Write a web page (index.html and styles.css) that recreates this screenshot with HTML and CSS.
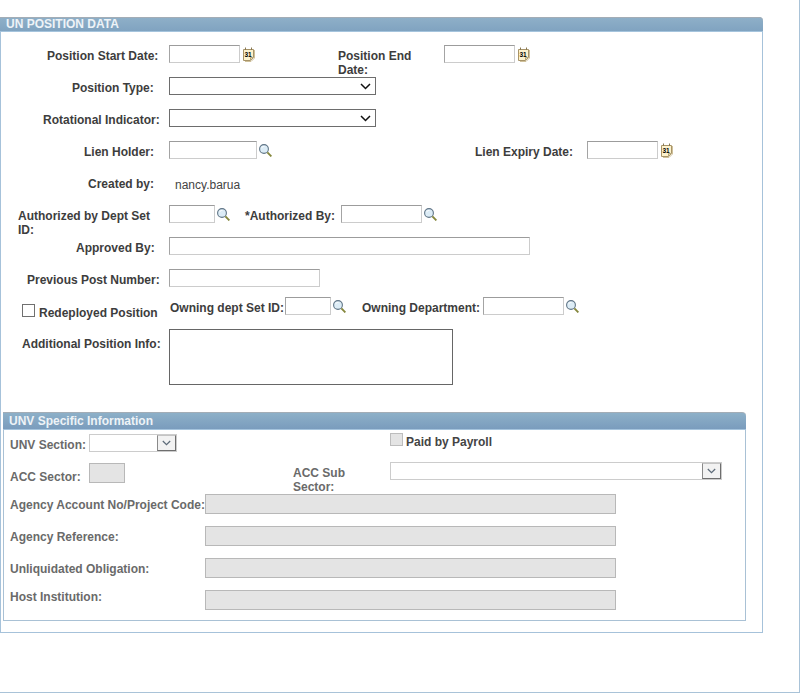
FILE: index.html
```html
<!DOCTYPE html>
<html lang="en">
<head>
<meta charset="utf-8">
<title>UN Position Data</title>
<link rel="stylesheet" href="styles.css">
</head>
<body>
<svg class="defs" width="0" height="0" aria-hidden="true">
  <symbol id="mag" viewBox="0 0 13 13">
    <circle cx="5" cy="5" r="4.4" fill="#dcecf6" stroke="#5f7486" stroke-width="1.1"/>
    <path d="M2.5 4.2C3 3 4 2.4 5.4 2.5" fill="none" stroke="#fff"/>
    <path d="M8.4 8.4L12.4 12.4" stroke="#85873c" stroke-width="1.9"/>
  </symbol>
  <symbol id="chev" viewBox="0 0 11 7">
    <path d="M1 1L5.5 5.5L10 1" fill="none" stroke="currentColor" stroke-width="1.5"/>
  </symbol>
  <symbol id="calbase" viewBox="0 0 13 15">
    <path d="M1.5 2.5H11.5V10.5L8.5 13.5H1.5Z" fill="#fdf2cc" stroke="#a89468"/>
    <path d="M12.5 3V11L9 14.5H3" fill="none" stroke="#cfc09a"/>
    <path d="M8.5 13V10.5H11" fill="#e6d7a8" stroke="#b7a678"/>
    <path d="M3.5 0.5V3M9.5 0.5V3" stroke="#8a7a55"/>
  </symbol>
</svg>
<div class="page">
  <section class="panel">
    <h2 class="head">UN POSITION DATA</h2>
    <div class="body">
      <div class="row">
        <label class="col1 lbl p-start">Position Start Date:</label>
        <input class="in w71" type="text" aria-label="Position Start Date">
        <svg class="cal" viewBox="0 0 13 15"><use href="#calbase"/><text class="cal-num" x="2.6" y="10">31</text></svg>
        <label class="lbl wrap end-lbl">Position End Date:</label>
        <input class="in w71" type="text" aria-label="Position End Date">
        <svg class="cal" viewBox="0 0 13 15"><use href="#calbase"/><text class="cal-num" x="2.6" y="10">31</text></svg>
      </div>
      <div class="row">
        <label class="col1 lbl p-type">Position Type:</label>
        <div class="sel w207"><select aria-label="Position Type"></select><svg class="chev"><use href="#chev"/></svg></div>
      </div>
      <div class="row">
        <label class="col1 lbl p-rot">Rotational Indicator:</label>
        <div class="sel w207"><select aria-label="Rotational Indicator"></select><svg class="chev"><use href="#chev"/></svg></div>
      </div>
      <div class="row">
        <label class="col1 lbl p-lien">Lien Holder:</label>
        <input class="in w88" type="text" aria-label="Lien Holder">
        <svg class="mag"><use href="#mag"/></svg>
        <label class="lbl expiry-lbl">Lien Expiry Date:</label>
        <input class="in w71" type="text" aria-label="Lien Expiry Date">
        <svg class="cal" viewBox="0 0 13 15"><use href="#calbase"/><text class="cal-num" x="2.6" y="10">31</text></svg>
      </div>
      <div class="row">
        <span class="col1 lbl p-created">Created by:</span>
        <span class="value">nancy.barua</span>
      </div>
      <div class="row">
        <label class="col1 lbl wrap p-dept">Authorized by Dept Set ID:</label>
        <input class="in w46" type="text" aria-label="Authorized by Dept Set ID">
        <svg class="mag"><use href="#mag"/></svg>
        <label class="lbl auth-lbl">*Authorized By:</label>
        <input class="in w81" type="text" aria-label="Authorized By">
        <svg class="mag"><use href="#mag"/></svg>
      </div>
      <div class="row">
        <label class="col1 lbl p-appr">Approved By:</label>
        <input class="in w361" type="text" aria-label="Approved By">
      </div>
      <div class="row row-short">
        <label class="col1 lbl p-prev">Previous Post Number:</label>
        <input class="in w151" type="text" aria-label="Previous Post Number">
      </div>
      <div class="row">
        <div class="col1 check-col">
          <input class="check" type="checkbox" id="redeployed">
          <label class="lbl redeployed-lbl" for="redeployed">Redeployed Position</label>
        </div>
        <label class="lbl own-set-lbl">Owning dept Set ID:</label>
        <input class="in w46" type="text" aria-label="Owning dept Set ID">
        <svg class="mag"><use href="#mag"/></svg>
        <label class="lbl own-dept-lbl">Owning Department:</label>
        <input class="in w81" type="text" aria-label="Owning Department">
        <svg class="mag"><use href="#mag"/></svg>
      </div>
      <div class="row row-area">
        <label class="col1 lbl p-info">Additional Position Info:</label>
        <textarea class="area" aria-label="Additional Position Info"></textarea>
      </div>

      <section class="sub">
        <h3 class="subhead">UNV Specific Information</h3>
        <div class="subbody">
          <div class="srow srow-a">
            <label class="slbl col2 unv-lbl">UNV Section:</label>
            <div class="dsel w88 unv-sel"><select aria-label="UNV Section" disabled></select><span class="dbtn"><svg class="chev small"><use href="#chev"/></svg></span></div>
            <input class="check dis paid-check" type="checkbox" disabled aria-label="Paid by Payroll">
            <span class="lbl paid-lbl">Paid by Payroll</span>
          </div>
          <div class="srow srow-b">
            <label class="slbl col2 acc-lbl">ACC Sector:</label>
            <input class="dis-in acc-in" type="text" disabled aria-label="ACC Sector">
            <label class="slbl wrap sub-lbl">ACC Sub Sector:</label>
            <div class="dsel w332"><select aria-label="ACC Sub Sector" disabled></select><span class="dbtn"><svg class="chev small"><use href="#chev"/></svg></span></div>
          </div>
          <div class="srow">
            <label class="slbl col3">Agency Account No/Project Code:</label>
            <input class="dis-in w411" type="text" disabled aria-label="Agency Account No/Project Code">
          </div>
          <div class="srow">
            <label class="slbl col3">Agency Reference:</label>
            <input class="dis-in w411" type="text" disabled aria-label="Agency Reference">
          </div>
          <div class="srow">
            <label class="slbl col3">Unliquidated Obligation:</label>
            <input class="dis-in w411" type="text" disabled aria-label="Unliquidated Obligation">
          </div>
          <div class="srow srow-last">
            <label class="slbl col3 host-lbl">Host Institution:</label>
            <input class="dis-in w411" type="text" disabled aria-label="Host Institution">
          </div>
        </div>
      </section>
    </div>
  </section>
</div>
</body>
</html>
```
FILE: styles.css
```css
* { box-sizing: border-box; }
html, body { margin: 0; padding: 0; background: #fff; }
body { font-family: "Liberation Sans", Arial, sans-serif; font-size: 12px; line-height: 14px; color: #3d3d3d; }
.defs { position: absolute; }
.page { width: 800px; height: 693px; padding-top: 17px; border-right: 1px solid #a9c3d8; border-bottom: 1px solid #a9c3d8; }

.panel { width: 763px; }
.head { margin: 0; height: 15px; padding: 0 0 0 6px; font-size: 12px; line-height: 14px; font-weight: 700; color: #eef3f7;
  background: linear-gradient(#8fb0c8, #7fa2c0); box-shadow: inset 0 1px 0 #a3adb6, inset 0 -1px 0 #a5c4dd; border-top-right-radius: 4px; }
.body { border: 1px solid #a6c2da; border-top: 0; padding: 13px 0 11px; }

.row { display: flex; align-items: flex-start; height: 32px; }
.row-short { height: 28px; }
.row-area { height: 56px; }
.col1 { width: 168px; flex: none; }
.lbl { font-weight: 700; margin-top: 4px; white-space: nowrap; }
.wrap { white-space: normal; }

.p-start { padding-left: 46px; }
.p-type { padding-left: 71px; }
.p-rot { padding-left: 42px; }
.p-lien { padding-left: 83px; }
.p-created { padding-left: 87px; }
.p-dept { padding: 0 10px 0 17px; }
.p-appr { padding-left: 75px; }
.p-prev { padding-left: 26px; }
.p-info { padding-left: 21px; margin-top: 8px; }

.end-lbl { width: 80px; margin: 4px 26px 0 83px; }
.expiry-lbl { width: 112px; margin: 4px 0 0 203px; }
.auth-lbl { width: 96px; margin-left: 15px; }
.own-set-lbl { width: 115px; margin-left: 1px; }
.own-dept-lbl { width: 121px; margin-left: 16px; }
.value { margin: 5px 0 0 6px; color: #444; }

.in { height: 18px; padding: 0 2px; margin: 0; flex: none; background: #fff; border: 1px solid #ccc; border-top-color: #9c9c9c; border-left-color: #a4a4a4; }
.w46 { width: 46px; }
.w71 { width: 71px; }
.w81 { width: 81px; }
.w88 { width: 88px; }
.w151 { width: 151px; }
.w207 { width: 207px; }
.w332 { width: 332px; }
.w361 { width: 361px; }
.w411 { width: 411px; }

.cal { width: 13px; height: 15px; margin: 2px 0 0 2px; flex: none; }
.cal-num { font-family: "Liberation Sans", sans-serif; font-size: 6.5px; font-weight: 700; letter-spacing: -0.2px; fill: #000; }
.mag { width: 13px; height: 13px; margin: 3px 0 0 2px; flex: none; }

.sel { display: flex; align-items: center; height: 18px; flex: none; border: 1px solid #6d6d6d; background: #fff; padding-right: 4px; }
.sel select, .dsel select { flex: 1; min-width: 0; height: 100%; border: 0; padding: 0; margin: 0; background: transparent; appearance: none; -webkit-appearance: none; }
.chev { width: 11px; height: 7px; color: #111; flex: none; }
.chev.small { width: 9px; height: 6px; color: #5c6a78; }

.check-col { display: flex; align-items: flex-start; padding-left: 21px; }
.check { appearance: none; -webkit-appearance: none; width: 13px; height: 13px; margin: 7px 0 0; flex: none; background: #fff; border: 1px solid #707070; }
.redeployed-lbl { margin: 9px 0 0 4px; }
.area { display: block; width: 284px; height: 56px; margin: 0; padding: 2px; resize: none; flex: none; border: 1px solid #666; background: #fff; }

.sub { width: 743px; margin: 27px 0 0 2px; }
.subhead { margin: 0; height: 18px; padding: 1px 0 0 6px; font-size: 12px; line-height: 14px; font-weight: 700; color: #eef3f7;
  background: linear-gradient(#8db0c8, #7a9cbd); border-top: 1px solid #a3adb6; border-bottom: 1px solid #a5c4dd; border-top-right-radius: 4px; }
.subbody { border: 1px solid #a9c1d5; border-top: 0; padding: 3px 0 10px; }
.srow { display: flex; align-items: flex-start; height: 32px; }
.srow-a { height: 29px; }
.srow-last { height: 20px; }
.slbl { font-weight: 700; color: #6a6a6a; white-space: nowrap; margin-top: 4px; flex: none; }
.slbl.wrap { white-space: normal; }
.col2 { width: 85px; padding-left: 6px; }
.col3 { width: 201px; padding-left: 6px; }
.unv-lbl { margin-top: 5px; }
.acc-lbl { margin-top: 8px; }
.host-lbl { margin-top: 0; }

.dsel { display: flex; height: 18px; flex: none; border: 1px solid #ccc; background: #fff; }
.unv-sel { margin-top: 1px; }
.dbtn { display: flex; align-items: center; justify-content: center; width: 19px; flex: none; margin: 0; background: #f2f2f2; border: 1px solid #c4c4c4; border-right-color: #6e6e6e; border-bottom-color: #6e6e6e; border-left-color: #8a8a8a; }
.check.dis { background: #e4e4e4; border-color: #bdbdbd; }
.paid-check { margin: 0 0 0 213px; }
.paid-lbl { margin: 2px 0 0 3px; color: #444; }
.dis-in { height: 20px; padding: 0; margin: 0; flex: none; background: #e4e4e4; border: 1px solid #b8b8b8; }
.acc-in { width: 36px; margin-top: 1px; }
.sub-lbl { width: 60px; margin: 4px 37px 0 168px; }
```
